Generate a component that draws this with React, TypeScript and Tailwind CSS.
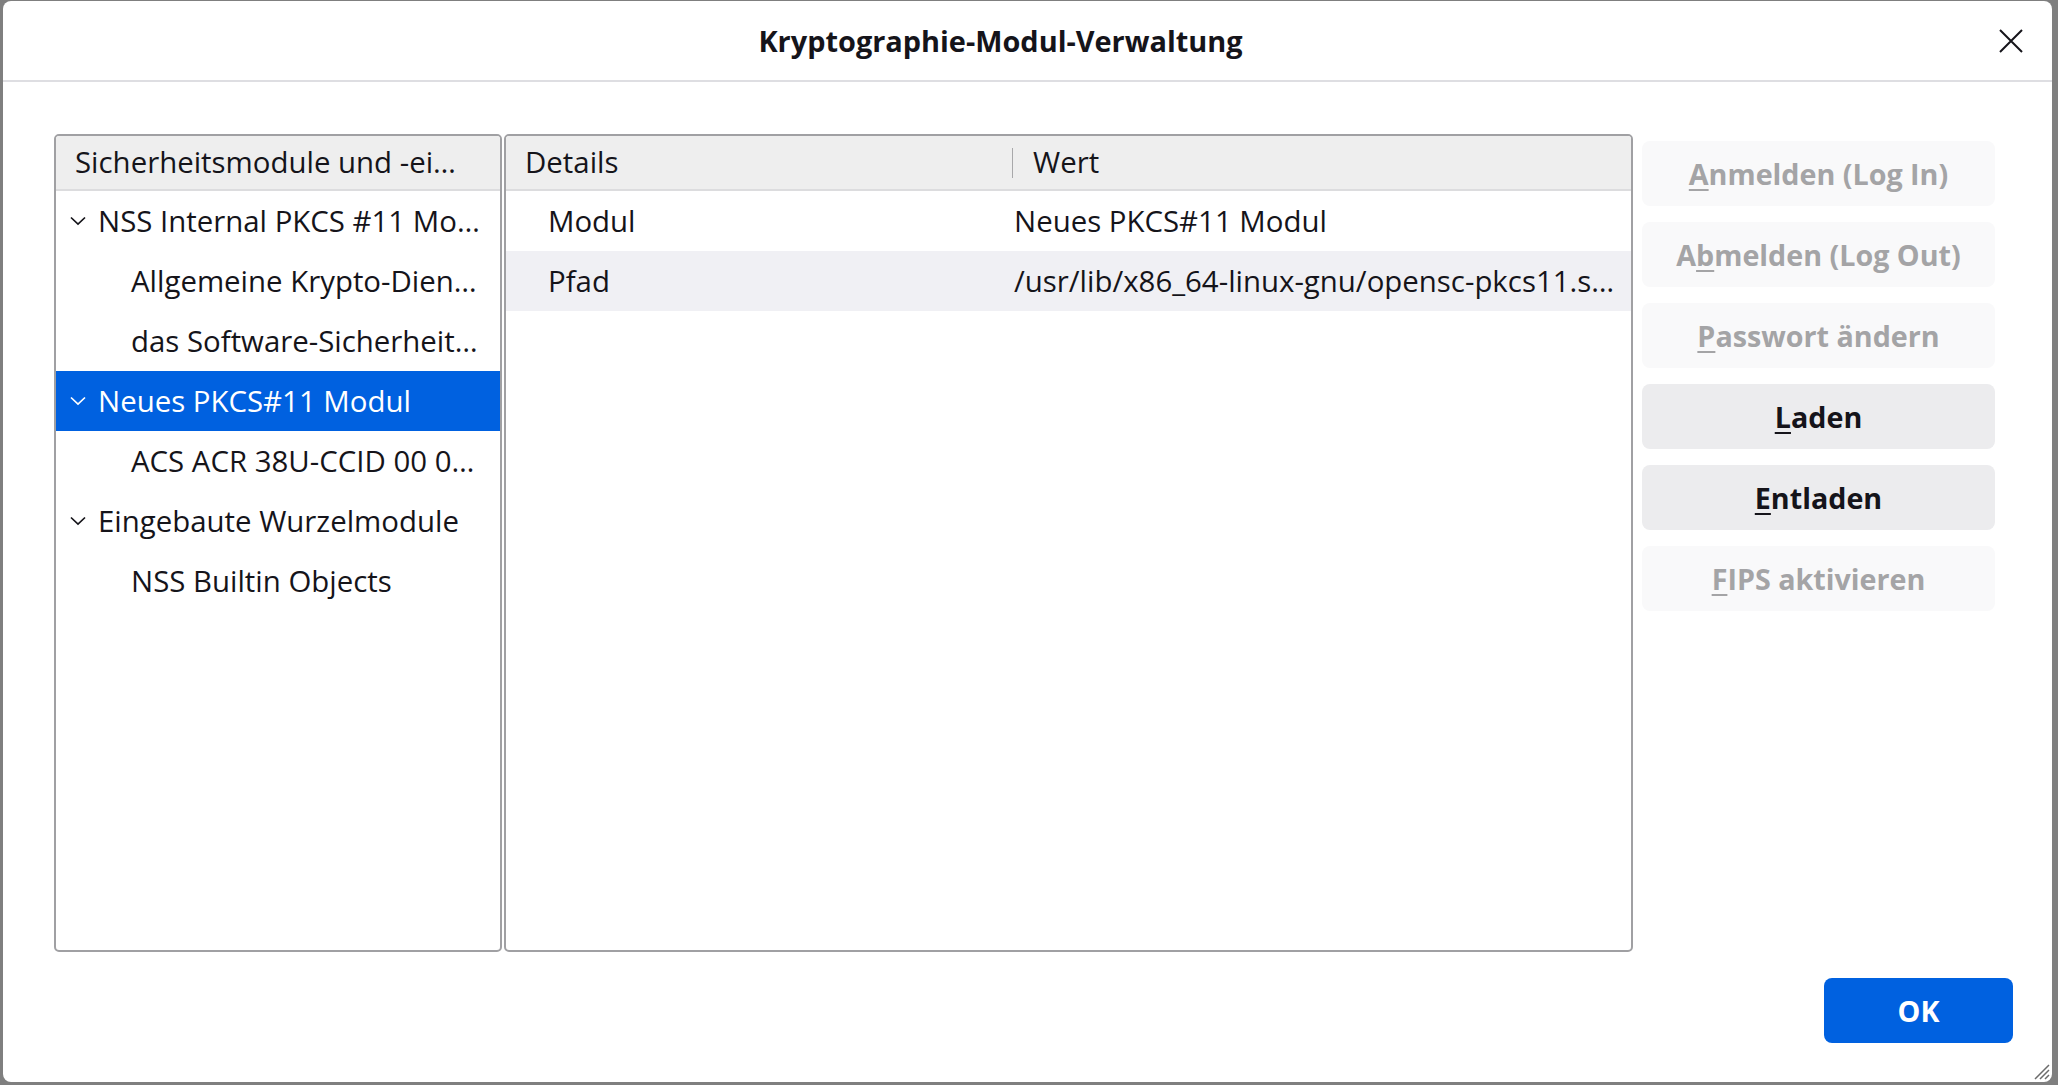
import type { ReactNode } from 'react';

const font = { fontFamily: '"Open Sans", "Noto Sans", sans-serif' };

function Chevron() {
  return (
    <svg width="18" height="11" viewBox="0 0 18 11" className="shrink-0">
      <path d="M2 2.5 L9 9 L16 2.5" fill="none" stroke="currentColor" strokeWidth="1.7" />
    </svg>
  );
}

type TreeRow = { label: string; parent?: boolean; selected?: boolean };

const rows: TreeRow[] = [
  { label: 'NSS Internal PKCS #11 Mo…', parent: true },
  { label: 'Allgemeine Krypto-Dien…' },
  { label: 'das Software-Sicherheit…' },
  { label: 'Neues PKCS#11 Modul', parent: true, selected: true },
  { label: 'ACS ACR 38U-CCID 00 0…' },
  { label: 'Eingebaute Wurzelmodule', parent: true },
  { label: 'NSS Builtin Objects' },
];

function SideButton({ children, disabled }: { children: ReactNode; disabled?: boolean }) {
  return (
    <button
      className={
        disabled
          ? 'h-[65px] w-full rounded-[8px] bg-[#f9f9fa] text-[#a4a4a6] font-bold text-[28.7px]'
          : 'h-[65px] w-full rounded-[8px] bg-[#ececee] text-[#15141a] font-bold text-[28.7px]'
      }
    >
      {children}
    </button>
  );
}

export default function App() {
  return (
    <div className="w-[2058px] h-[1085px] bg-[#7f7f7f] pl-[3px] pt-[1px] pr-[6px] pb-[3px] overflow-hidden" style={font}>
      <div className="relative h-full w-full bg-white rounded-[8px] flex flex-col text-[#15141a]">
        <header className="h-[81px] shrink-0 flex items-center border-b-2 border-[#dedee2]">
          <div className="flex-1 text-center font-bold text-[28.9px]">Kryptographie-Modul-Verwaltung</div>
          <div className="w-[54px] flex items-center">
            <svg width="26" height="26" viewBox="0 0 26 26">
              <path d="M2 2 L24 24 M24 2 L2 24" stroke="#15141a" strokeWidth="2" />
            </svg>
          </div>
        </header>

        <div className="flex pt-[52px] pl-[51px] pr-[57px]">
          <section className="w-[448px] h-[818px] border-2 border-[#a0a0a3] rounded-[5px] overflow-hidden text-[29.4px]">
            <div className="h-[55px] bg-[#eeeeee] border-b-2 border-[#dcdcde] flex items-center pl-[19px] whitespace-nowrap">
              Sicherheitsmodule und -ei…
            </div>
            {rows.map((row) => (
              <div
                key={row.label}
                className={
                  row.selected
                    ? 'h-[60px] flex items-center bg-[#0061e0] text-white whitespace-nowrap'
                    : 'h-[60px] flex items-center whitespace-nowrap'
                }
              >
                {row.parent ? (
                  <div className="flex items-center pl-[13px] gap-[11px]">
                    <Chevron />
                    <span>{row.label}</span>
                  </div>
                ) : (
                  <span className="pl-[75px]">{row.label}</span>
                )}
              </div>
            ))}
          </section>

          <section className="ml-[2px] w-[1129px] h-[818px] border-2 border-[#a0a0a3] rounded-[5px] overflow-hidden text-[29.4px]">
            <div className="h-[55px] bg-[#eeeeee] border-b-2 border-[#dcdcde] flex items-center">
              <div className="w-[506px] pl-[19px]">Details</div>
              <div className="h-[30px] w-px bg-[#a8a8aa]" />
              <div className="pl-[20px]">Wert</div>
            </div>
            <div className="h-[60px] flex items-center whitespace-nowrap">
              <div className="w-[506px] pl-[42px]">Modul</div>
              <div className="pl-[2px]">Neues PKCS#11 Modul</div>
            </div>
            <div className="h-[60px] flex items-center bg-[#f0f0f4] whitespace-nowrap">
              <div className="w-[506px] pl-[42px]">Pfad</div>
              <div className="pl-[2px]">/usr/lib/x86_64-linux-gnu/opensc-pkcs11.s…</div>
            </div>
          </section>

          <aside className="ml-[9px] w-[353px] pt-[7px] flex flex-col gap-[16px]">
            <SideButton disabled><u className="underline-offset-4">A</u>nmelden (Log In)</SideButton>
            <SideButton disabled>A<u className="underline-offset-4">b</u>melden (Log Out)</SideButton>
            <SideButton disabled><u className="underline-offset-4">P</u>asswort ändern</SideButton>
            <SideButton><u className="underline-offset-4">L</u>aden</SideButton>
            <SideButton><u className="underline-offset-4">E</u>ntladen</SideButton>
            <SideButton disabled><u className="underline-offset-4">F</u>IPS aktivieren</SideButton>
          </aside>
        </div>

        <footer className="flex justify-end pt-[26px] pr-[39px]">
          <button className="w-[189px] h-[65px] rounded-[8px] bg-[#0061e0] text-white font-bold text-[28.7px]">OK</button>
        </footer>

        <svg className="absolute right-[1px] bottom-[1px]" width="22" height="22" viewBox="0 0 22 22">
          <path d="M20 6 L6 20 M20 11 L11 20 M20 16 L16 20" stroke="#6b6b6b" strokeWidth="1.5" />
        </svg>
      </div>
    </div>
  );
}
